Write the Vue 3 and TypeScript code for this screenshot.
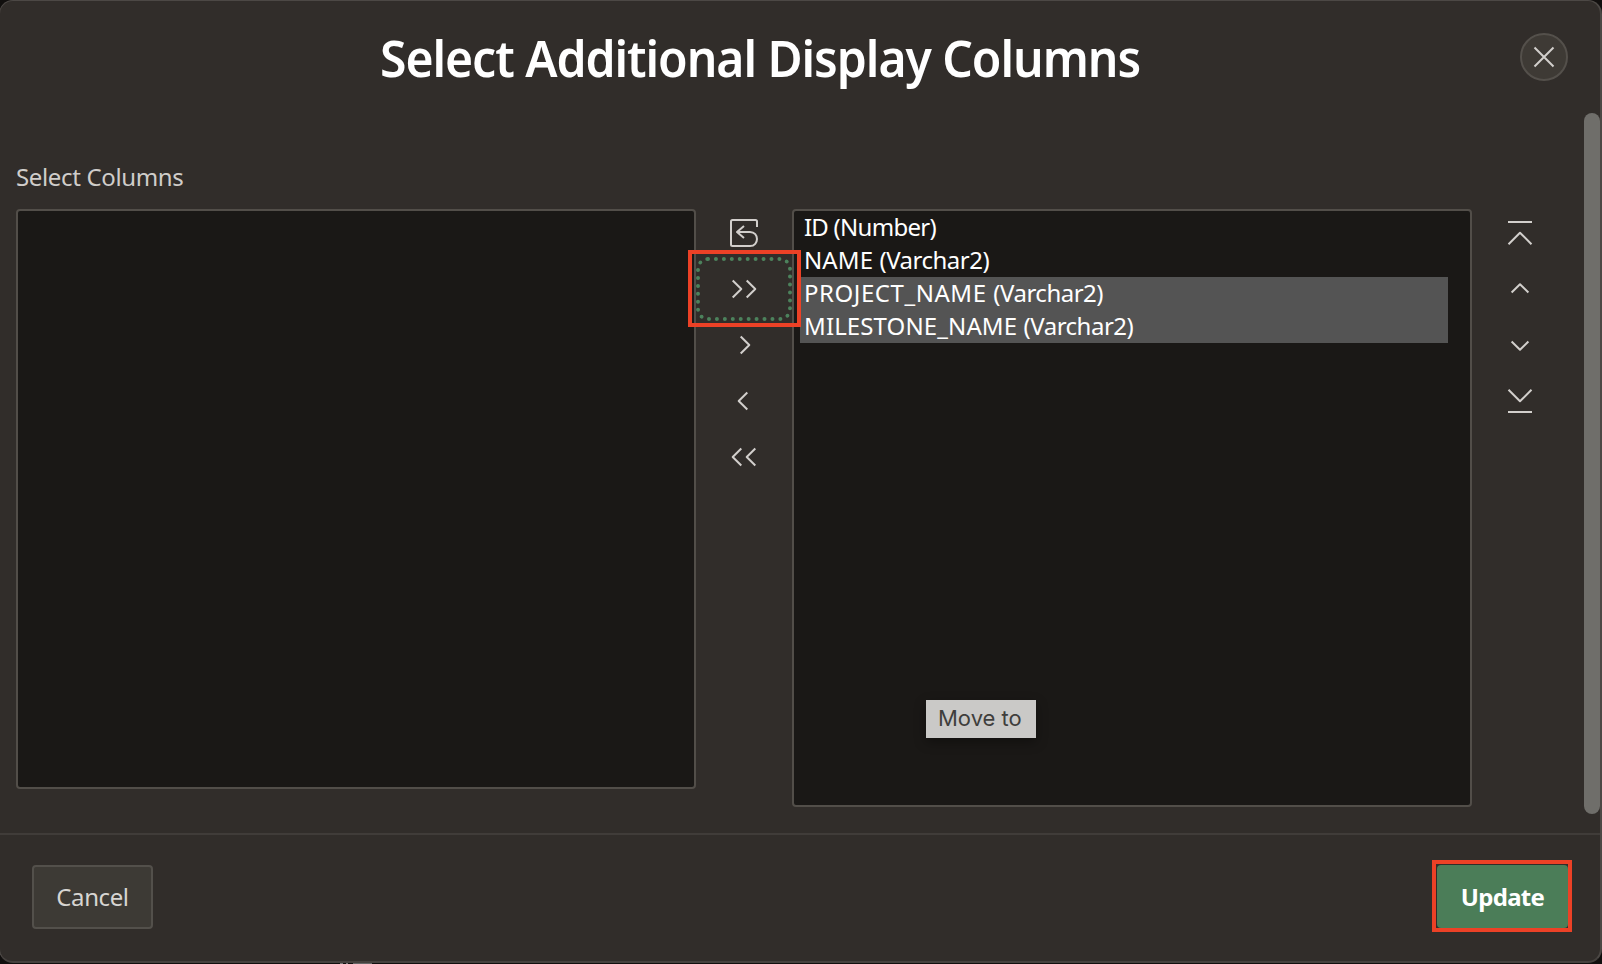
<script setup lang="ts">
interface Column { name: string; type: string; selected: boolean; fit: string }
interface Control { label: string; path: string; active?: boolean }

const columns: Column[] = [
  { name: 'ID', type: '(Number)', selected: false, fit: 'fit-id' },
  { name: 'NAME', type: '(Varchar2)', selected: false, fit: 'fit-name' },
  { name: 'PROJECT_NAME', type: '(Varchar2)', selected: true, fit: 'fit-project' },
  { name: 'MILESTONE_NAME', type: '(Varchar2)', selected: true, fit: 'fit-milestone' },
]

const moveControls: Control[] = [
  { label: 'Reset', path: 'M29 10V4.500Q29 3 27.500 3H4.500Q3 3 3 4.500V27.500Q3 29 4.500 29H22C31.300 29 31.300 15 22 15H9M16 9L9 15L16 21' },
  { label: 'Move All', path: 'M4.700 7.500L13.300 16L4.700 24.500M18.700 7.500L27.300 16L18.700 24.500', active: true },
  { label: 'Move', path: 'M12.700 7.500L21.300 16L12.700 24.500' },
  { label: 'Remove', path: 'M19.300 7.500L10.700 16L19.300 24.500' },
  { label: 'Remove All', path: 'M13.300 7.500L4.700 16L13.300 24.500M27.300 7.500L18.700 16L27.300 24.500' },
]

const orderControls: Control[] = [
  { label: 'Top', path: 'M4 5H28M4.500 27.200L16 15.700L27.500 27.200' },
  { label: 'Up', path: 'M7.600 19.500L16 11.200L24.400 19.500' },
  { label: 'Down', path: 'M7.600 12.500L16 20.800L24.400 12.500' },
  { label: 'Bottom', path: 'M4.500 4.800L16 16.300L27.500 4.800M4 27H28' },
]
</script>

<template>
  <div class="stage">
    <section class="dialog">
      <header class="header">
        <h1 class="title"><span class="title-text">Select Additional Display Columns</span></h1>
        <button class="close" aria-label="Close">
          <svg width="24" height="24" viewBox="0 0 24 24"><path d="M2.500 2.500L21.500 21.500M21.500 2.500L2.500 21.500" /></svg>
        </button>
      </header>
      <div class="body">
        <div class="label"><span class="label-text">Select Columns</span></div>
        <div class="shuttle">
          <div class="list list-left"></div>
          <div class="controls">
            <button v-for="c in moveControls" :key="c.label" class="control" :class="{ active: c.active }" :aria-label="c.label">
              <svg width="32" height="32" viewBox="0 0 32 32"><path :d="c.path" /></svg>
              <i v-if="c.active" class="callout"></i>
            </button>
          </div>
          <ul class="list list-right">
            <li v-for="c in columns" :key="c.name" class="option" :class="[c.fit, { selected: c.selected }]">{{ c.name }} <span class="type">{{ c.type }}</span></li>
            <li class="tooltip">Move to</li>
          </ul>
          <div class="controls">
            <button v-for="c in orderControls" :key="c.label" class="control" :aria-label="c.label">
              <svg width="32" height="32" viewBox="0 0 32 32"><path :d="c.path" /></svg>
            </button>
          </div>
        </div>
        <div class="scrollbar"></div>
      </div>
      <footer class="footer">
        <button class="btn"><span class="cancel-text">Cancel</span></button>
        <div class="frame"><button class="btn primary"><span class="update-text">Update</span></button></div>
      </footer>
    </section>
    <i class="backdrop-mark"></i>
  </div>
</template>

<style>
html, body { margin: 0; background: #110f0e; overflow: hidden; }
</style>

<style scoped>
* { box-sizing: border-box; }
.stage {
  position: relative;
  width: 1602px;
  height: 964px;
  overflow: hidden;
  background: #110f0e;
  font-family: "Noto Sans", "Open Sans", sans-serif;
}
.dialog {
  display: flex;
  flex-direction: column;
  width: 1603px;
  height: 963px;
  margin-left: -1px;
  border: 1px solid #4c4845;
  border-right-width: 2px;
  border-bottom: 2px solid #45413e;
  border-radius: 14px;
  background: #312d2a;
}
button { margin: 0; padding: 0; border: 0; background: none; font: inherit; }
span { display: inline-block; white-space: nowrap; }
svg { display: block; fill: none; stroke: #d2cfcc; stroke-width: 2; stroke-linejoin: round; }
.header {
  flex: none;
  display: flex;
  align-items: flex-start;
  height: 112px;
  padding: 32px 32px 0 0;
}
.title {
  flex: 1;
  margin: -9px 0 0;
  text-align: center;
  color: #fff;
  font-size: 50px;
  line-height: 68px;
  font-weight: 650;
}
.title-text { letter-spacing: -1.1px; transform: scaleX(.962); }
.close {
  display: flex;
  align-items: center;
  justify-content: center;
  width: 48px;
  height: 48px;
  border: 2px solid #54504b;
  border-radius: 50%;
  background: #3e3a35;
}
.body {
  position: relative;
  flex: none;
  height: 720px;
  padding: 47px 0 0 16px;
}
.label { height: 49px; color: #d0cdca; font-size: 24px; line-height: 34px; }
.label-text { letter-spacing: -.35px; }
.shuttle { display: flex; align-items: flex-start; }
.list {
  position: relative;
  flex: none;
  width: 680px;
  margin: 0;
  border: 2px solid #524e49;
  border-radius: 4px;
  background: #1a1816;
  list-style: none;
}
.list-left { height: 580px; }
.list-right { height: 598px; padding: 0 22px 0 6px; }
.option {
  height: 33px;
  padding-left: 4px;
  color: #fff;
  font-size: 24px;
  line-height: 31px;
}
.fit-id { letter-spacing: -.8px; }
.fit-name { letter-spacing: .1px; }
.fit-project { letter-spacing: .55px; }
.fit-milestone { letter-spacing: .12px; }
.type { letter-spacing: -.5px; }
.fit-id .type { letter-spacing: -.7px; }
.selected { background: #545454; }
.controls { flex: none; width: 96px; }
.control {
  position: relative;
  display: flex;
  align-items: center;
  justify-content: center;
  width: 96px;
  height: 56px;
  top: -4px;
}
.active::before {
  content: "";
  position: absolute;
  inset: -4px 0;
  border: 4px dotted #4c825c;
  border-radius: 12px;
}
.callout {
  position: absolute;
  z-index: 2;
  left: -8px;
  top: -11px;
  width: 113px;
  height: 77px;
  border: 4px solid #ec4126;
}
.tooltip {
  position: absolute;
  left: 132px;
  top: 489px;
  width: 110px;
  height: 38px;
  padding-left: 12px;
  background: #cac9c7;
  box-shadow: 0 4px 12px rgba(0, 0, 0, .35);
  color: #3f3e3c;
  font-family: Inter, sans-serif;
  font-size: 22px;
  line-height: 37px;
}
.scrollbar {
  position: absolute;
  right: 0;
  top: 0;
  width: 16px;
  height: 701px;
  border-radius: 8px;
  background: #6f6e6a;
}
.footer {
  flex: 1;
  display: flex;
  align-items: flex-start;
  justify-content: space-between;
  padding: 25px 28px 0 32px;
  border-top: 2px solid #403c39;
}
.btn {
  width: 121px;
  height: 64px;
  margin-top: 5px;
  padding-bottom: 2px;
  border: 2px solid #53504b;
  border-radius: 4px;
  background: #3d3a35;
  color: #d7d5d2;
  font-size: 24px;
}
.cancel-text { letter-spacing: -.4px; }
.frame {
  width: 140px;
  height: 72px;
  border: 4px solid #ec4126;
}
.btn.primary {
  display: block;
  width: 131px;
  height: 63px;
  margin: 1px 0 0 1px;
  padding: 0;
  border: 0;
  background: #4b7d58;
  color: #fff;
  font-weight: 700;
}
.update-text { letter-spacing: -.7px; }
.backdrop-mark {
  position: absolute;
  left: 340px;
  top: 963px;
  width: 32px;
  height: 1px;
  background: linear-gradient(90deg, #777 0 3px, #110f0e 3px 6px, #777 6px 8px, #110f0e 8px 13px, #666 13px);
}
</style>
